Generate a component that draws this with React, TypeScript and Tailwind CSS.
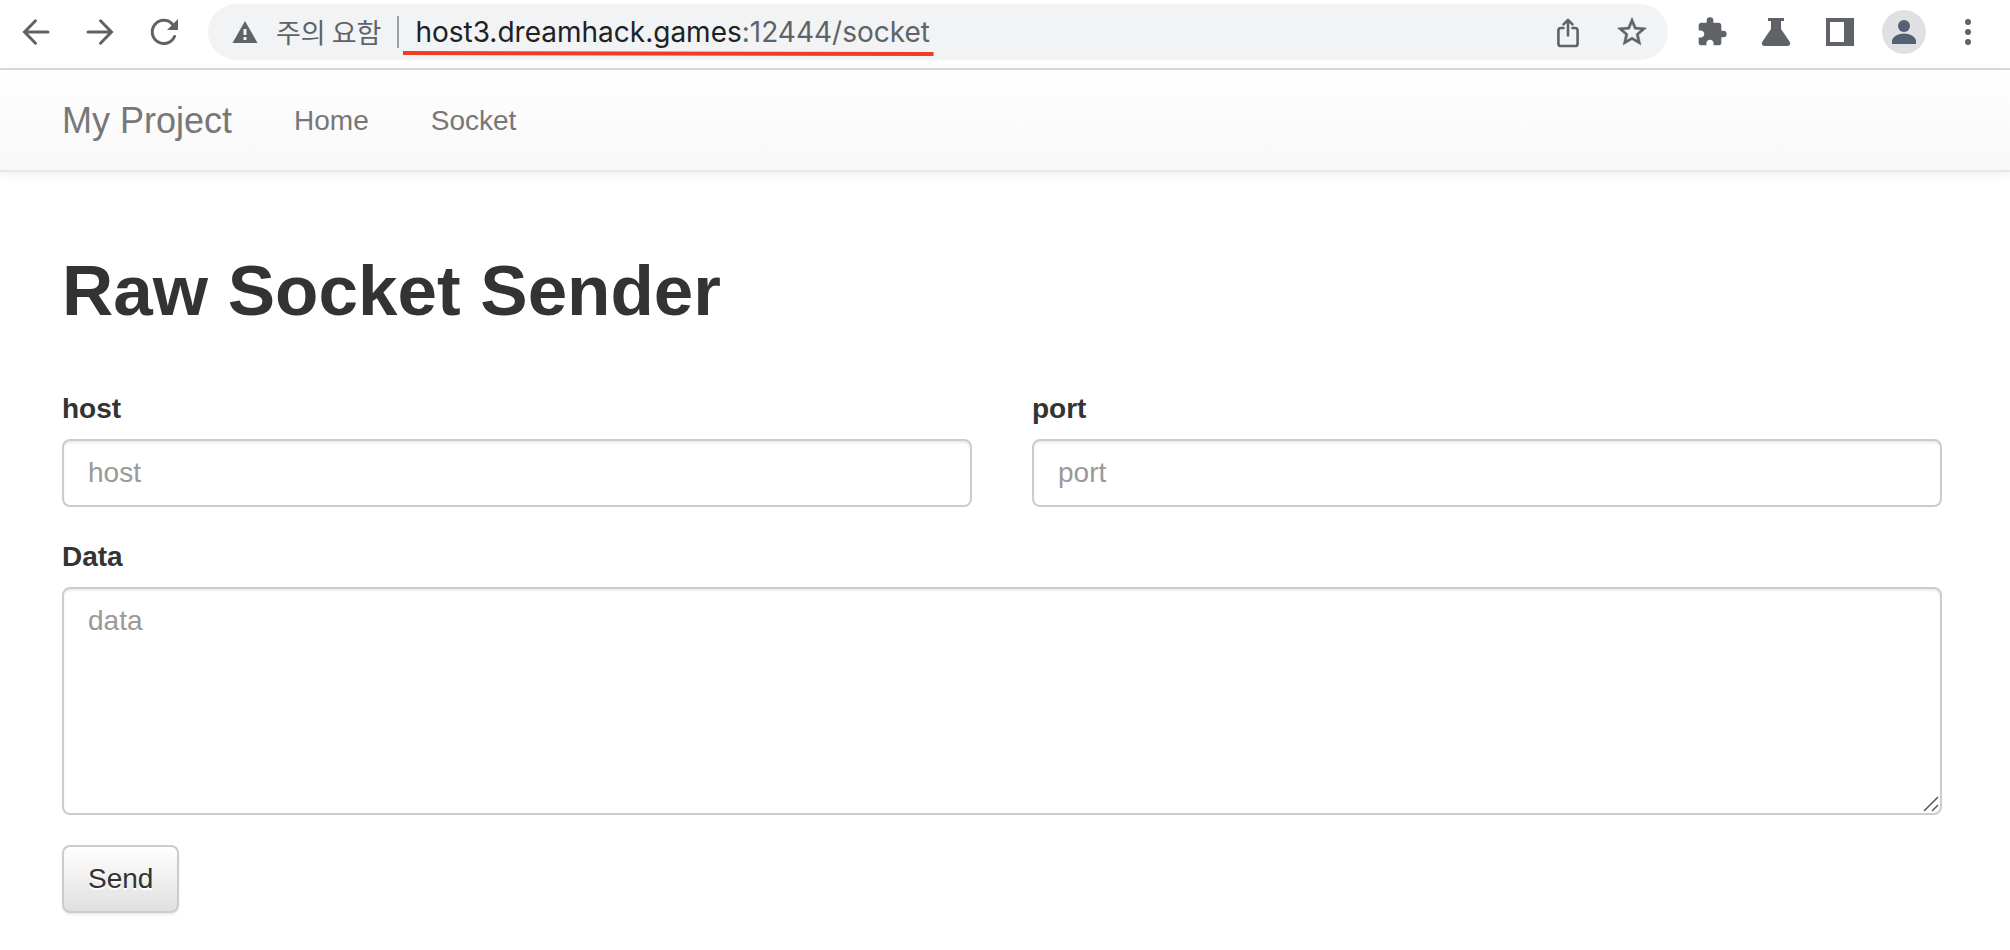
import React, {useState} from 'react';

interface FieldProps {
  id: string;
  label: string;
  placeholder: string;
  value: string;
  onChange: ( value: string ) => void;
}

const controlClass = 'block w-full rounded-lg border-2 border-[#cccccc] bg-white px-6 text-[28px] leading-10 text-[#555555] placeholder:text-[#999999] shadow-[inset_0_2px_2px_rgba(0,0,0,0.075)] outline-none focus:border-[#66afe9]';

const BackIcon = () => (
  <svg viewBox="0 0 32 32" className="h-8 w-8" fill="none" stroke="#5f6368" strokeWidth="3" strokeLinecap="round">
    <path d="M28 16H5M15.5 4.8L4.5 16l11 11.2" />
  </svg>
);

const ForwardIcon = () => (
  <svg viewBox="0 0 32 32" className="h-8 w-8" fill="none" stroke="#5f6368" strokeWidth="3" strokeLinecap="round">
    <path d="M4 16h23M16.5 4.8L27.5 16l-11 11.2" />
  </svg>
);

const ReloadIcon = () => (
  <svg viewBox="0 0 32 32" className="h-8 w-8">
    <path d="M26.5 20.5A11.6 11.6 0 1 1 24.5 8.2" fill="none" stroke="#5f6368" strokeWidth="3" strokeLinecap="round" />
    <path d="M30 3v11H19z" fill="#5f6368" />
  </svg>
);

const WarningIcon = () => (
  <svg viewBox="0 0 26 24" className="h-6 w-[26px] shrink-0">
    <path d="M13 1L25.5 23H.5z" fill="#5f6368" />
    <path d="M11.5 9h3v6h-3zM11.5 17h3v3h-3z" fill="#f1f3f4" />
  </svg>
);

const ShareIcon = () => (
  <svg viewBox="0 0 32 32" className="h-8 w-8" fill="none" stroke="#5f6368" strokeWidth="2.6" strokeLinecap="round" strokeLinejoin="round">
    <path d="M11.5 12H9a2.6 2.6 0 0 0-2.6 2.6v12.8A2.6 2.6 0 0 0 9 30h14a2.6 2.6 0 0 0 2.6-2.6V14.6A2.6 2.6 0 0 0 23 12h-2.5" />
    <path d="M16 19.5V4M11.5 8.3L16 3.8l4.5 4.5" />
  </svg>
);

const StarIcon = () => (
  <svg viewBox="1 1 22 22" className="h-8 w-8" fill="#5f6368" stroke="#5f6368" strokeWidth="0.3">
    <path d="M22 9.24l-7.19-.62L12 2 9.19 8.63 2 9.24l5.46 4.73L5.82 21 12 17.27 18.18 21l-1.63-7.03L22 9.24zM12 15.4l-3.76 2.27 1-4.28-3.32-2.88 4.38-.38L12 6.1l1.71 4.04 4.38.38-3.32 2.88 1 4.28L12 15.4z" />
  </svg>
);

const PuzzleIcon = () => (
  <svg viewBox="0 0 24 24" className="h-8 w-8" fill="#5f6368">
    <path d="M20.5 11H19V7c0-1.1-.9-2-2-2h-4V3.5a2.5 2.5 0 0 0-5 0V5H4c-1.1 0-1.99.9-1.99 2v3.8H3.5c1.49 0 2.7 1.21 2.7 2.7s-1.21 2.7-2.7 2.7H2V20c0 1.1.9 2 2 2h3.8v-1.5c0-1.49 1.21-2.7 2.7-2.7 1.49 0 2.7 1.21 2.7 2.7V22H17c1.1 0 2-.9 2-2v-4h1.5a2.5 2.5 0 0 0 0-5z" />
  </svg>
);

const FlaskIcon = () => (
  <svg viewBox="0 0 32 32" className="h-8 w-8" fill="#5f6368">
    <path d="M8 2h16v3h-3v8l8.5 12.5c1.5 2.3.3 4.5-2.2 4.5H4.7c-2.5 0-3.7-2.2-2.2-4.5L11 13V5H8z" />
  </svg>
);

const SidePanelIcon = () => (
  <svg viewBox="0 0 32 32" className="h-8 w-8" fill="#5f6368">
    <path fillRule="evenodd" d="M2 2h28v28H2zM6 6v20h14V6z" />
  </svg>
);

const PersonIcon = () => (
  <svg viewBox="0 0 44 44" className="h-11 w-11">
    <circle cx="22" cy="22" r="22" fill="#dee0e4" />
    <circle cx="22" cy="16" r="6" fill="#565f73" />
    <path d="M10 34v-3c0-4.5 7-7.5 12-7.5s12 3 12 7.5v3z" fill="#565f73" />
  </svg>
);

const MenuIcon = () => (
  <svg viewBox="0 0 32 32" className="h-8 w-8" fill="#5f6368">
    <circle cx="16" cy="6" r="3" />
    <circle cx="16" cy="16" r="3" />
    <circle cx="16" cy="26" r="3" />
  </svg>
);

const BrowserBar = () => (
  <div className="flex items-center border-b-2 border-[#dadce0] bg-white pt-1 pb-2 pl-5">
    <div className="flex gap-8">
      <button type="button" aria-label="Back"><BackIcon /></button>
      <button type="button" aria-label="Forward"><ForwardIcon /></button>
      <button type="button" aria-label="Reload"><ReloadIcon /></button>
    </div>
    <div className="ml-7 flex h-14 min-w-0 flex-1 items-center rounded-full bg-[#f1f3f4] pr-5 pl-6">
      <WarningIcon />
      <span className="ml-[18px] font-['Noto_Sans_CJK_KR',sans-serif] text-[27px] leading-8 whitespace-nowrap text-[#5f6368]">주의 요함</span>
      <span className="ml-4 h-8 w-0.5 bg-[#9aa0a6]" />
      <span className="relative ml-4 font-[Inter,sans-serif] text-[28px] leading-10 whitespace-nowrap text-[#202124]">
        host3.dreamhack.games<span className="text-[#5f6368]">:12444/socket</span>
        <svg viewBox="0 0 530 6" preserveAspectRatio="none" className="absolute -bottom-1 -left-3 h-1.5 w-[calc(100%+16px)]">
          <path d="M0 1L530 2V6L0 5z" fill="#ee3f24" />
        </svg>
      </span>
      <div className="ml-auto flex gap-8">
        <button type="button" aria-label="Share"><ShareIcon /></button>
        <button type="button" aria-label="Bookmark"><StarIcon /></button>
      </div>
    </div>
    <div className="mr-[26px] ml-7 flex items-center gap-[26px]">
      <div className="flex gap-8">
        <button type="button" aria-label="Extensions"><PuzzleIcon /></button>
        <button type="button" aria-label="Labs"><FlaskIcon /></button>
        <button type="button" aria-label="Side panel"><SidePanelIcon /></button>
      </div>
      <button type="button" aria-label="Profile"><PersonIcon /></button>
      <button type="button" aria-label="Menu"><MenuIcon /></button>
    </div>
  </div>
);

const Navbar = () => (
  <nav className="flex h-[102px] items-center border-b-2 border-[#e7e7e7] bg-linear-to-b from-white to-[#f8f8f8] pt-0.5 pl-[62px] text-[#777777] shadow-[0_2px_10px_rgba(0,0,0,0.075)]">
    <a href="#" className="text-4xl">My Project</a>
    <a href="#" className="ml-[62px] text-[28px] leading-10">Home</a>
    <a href="#socket" className="ml-[62px] text-[28px] leading-10">Socket</a>
  </nav>
);

const TextField: React.FC<FieldProps> = ( {id, label, placeholder, value, onChange} ) => (
  <div>
    <label htmlFor={id} className="mb-2.5 block text-[28px] leading-10 font-bold">{label}</label>
    <input
      id={id}
      type="text"
      className={`${controlClass} h-[68px]`}
      placeholder={placeholder}
      value={value}
      onChange={( e ) => onChange( e.target.value )}
    />
  </div>
);

const App = () => {
  const [host, setHost] = useState( '' );
  const [port, setPort] = useState( '' );
  const [data, setData] = useState( '' );

  return (
    <div className="min-h-screen bg-white font-['Liberation_Sans',Arial,sans-serif] text-[#333333]">
      <BrowserBar />
      <Navbar />
      <main className="pr-[68px] pl-[62px]">
        <h1 className="pt-20 text-[71px] leading-[78px] font-bold">Raw Socket Sender</h1>
        <form className="mt-[59px]" onSubmit={( e ) => e.preventDefault()}>
          <div className="grid grid-cols-2 gap-[60px]">
            <TextField id="host" label="host" placeholder="host" value={host} onChange={setHost} />
            <TextField id="port" label="port" placeholder="port" value={port} onChange={setPort} />
          </div>
          <label htmlFor="data" className="mt-[30px] mb-2.5 block text-[28px] leading-10 font-bold">Data</label>
          <div className="relative">
            <textarea
              id="data"
              className={`${controlClass} h-[228px] resize-y py-3 [&::-webkit-resizer]:hidden`}
              placeholder="data"
              value={data}
              onChange={( e ) => setData( e.target.value )}
            />
            {/* resize grip */}
            <svg viewBox="0 0 16 16" className="pointer-events-none absolute right-[3px] bottom-[3px] h-4 w-4" stroke="#555555" strokeWidth="1.5">
              <path d="M1 15L15 1M9 15l6-6" />
            </svg>
          </div>
          <button
            type="submit"
            className="mt-[30px] h-[68px] rounded-lg border-2 border-[#cccccc] bg-linear-to-b from-white to-[#e0e0e0] px-6 text-[28px] leading-10 text-[#333333] shadow-[0_2px_2px_rgba(0,0,0,0.075)] text-shadow-[0_2px_0_#ffffff]"
          >
            Send
          </button>
        </form>
      </main>
    </div>
  );
};

export default App;
